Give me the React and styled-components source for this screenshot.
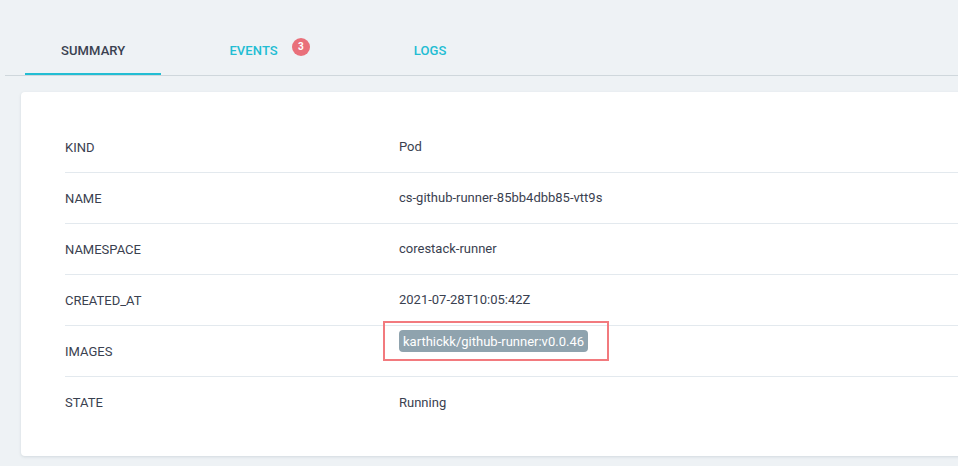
import React from 'react';
import styled, { createGlobalStyle } from 'styled-components';

const GlobalStyle = createGlobalStyle`
  html, body {
    margin: 0;
    padding: 0;
    background: #eef2f5;
    font-family: Roboto, "Liberation Sans", Arial, sans-serif;
    overflow: hidden;
  }
`;

const Page = styled.div`
  width: 958px;
  height: 466px;
  overflow: hidden;
  padding-top: 30px;
  box-sizing: border-box;
`;

// tab strip
const TabBar = styled.div`
  display: flex;
  align-items: flex-end;
  gap: 32px;
  margin-left: 5px;
  padding-left: 20px;
  border-bottom: 1px solid #cfd7dc;
  height: 45px;
`;

const Tab = styled.div`
  display: flex;
  align-items: center;
  height: 41px;
  padding: 0 36px 2px;
  font-size: 13px;
  font-weight: 500;
  letter-spacing: 0.1px;
  color: ${(props) => (props.active ? '#3a4150' : '#22bdd3')};
  border-bottom: 2px solid ${(props) => (props.active ? '#22bdd3' : 'transparent')};
  cursor: pointer;
`;

const Badge = styled.span`
  display: inline-flex;
  align-items: center;
  justify-content: center;
  width: 18px;
  height: 18px;
  margin-left: 14px;
  margin-bottom: 8px;
  border-radius: 50%;
  background: #e9707a;
  color: #fff;
  font-size: 10px;
  font-weight: 700;
`;

// summary card
const Card = styled.div`
  margin: 16px 0 0 21px;
  width: 1000px;
  background: #fff;
  border-radius: 4px;
  box-shadow: 0 1px 3px rgba(60, 80, 100, 0.15);
  padding: 30px 0 28px 44px;
  box-sizing: border-box;
`;

const Row = styled.div`
  display: grid;
  grid-template-columns: 334px 1fr;
  align-items: center;
  height: 51px;
  box-sizing: border-box;
  border-bottom: ${(props) => (props.last ? 'none' : '1px solid #e3e9ee')};
  font-size: 13px;
  color: #3a4150;
`;

const Label = styled.div`
  text-transform: uppercase;
`;

const Value = styled.div`
  padding-bottom: 1px;
`;

const ChipWrap = styled.div`
  position: relative;
  display: inline-block;
  margin-bottom: 20px;
`;

const Chip = styled.span`
  display: inline-flex;
  align-items: center;
  height: 22px;
  padding: 0 4px;
  border-radius: 4px;
  background: #8fa3ae;
  color: #fff;
  font-size: 13px;
`;

const Highlight = styled.div`
  position: absolute;
  left: -16px;
  right: -21px;
  top: -9px;
  bottom: -9px;
  border: 2px solid #f27a7e;
  pointer-events: none;
`;

const rows = [
  ['Kind', 'Pod'],
  ['Name', 'cs-github-runner-85bb4dbb85-vtt9s'],
  ['Namespace', 'corestack-runner'],
  ['Created_at', '2021-07-28T10:05:42Z'],
  ['Images', null],
  ['State', 'Running'],
];

function App() {
  return (
    <Page>
      <GlobalStyle />
      <TabBar>
        <Tab active>SUMMARY</Tab>
        <Tab>
          EVENTS
          <Badge>3</Badge>
        </Tab>
        <Tab>LOGS</Tab>
      </TabBar>
      <Card>
        {rows.map(([label, value], i) => (
          <Row key={label} last={i === rows.length - 1}>
            <Label>{label}</Label>
            {value !== null ? (
              <Value>{value}</Value>
            ) : (
              <div>
                <ChipWrap>
                  <Chip>karthickk/github-runner:v0.0.46</Chip>
                  <Highlight />
                </ChipWrap>
              </div>
            )}
          </Row>
        ))}
      </Card>
    </Page>
  );
}

export default App;
